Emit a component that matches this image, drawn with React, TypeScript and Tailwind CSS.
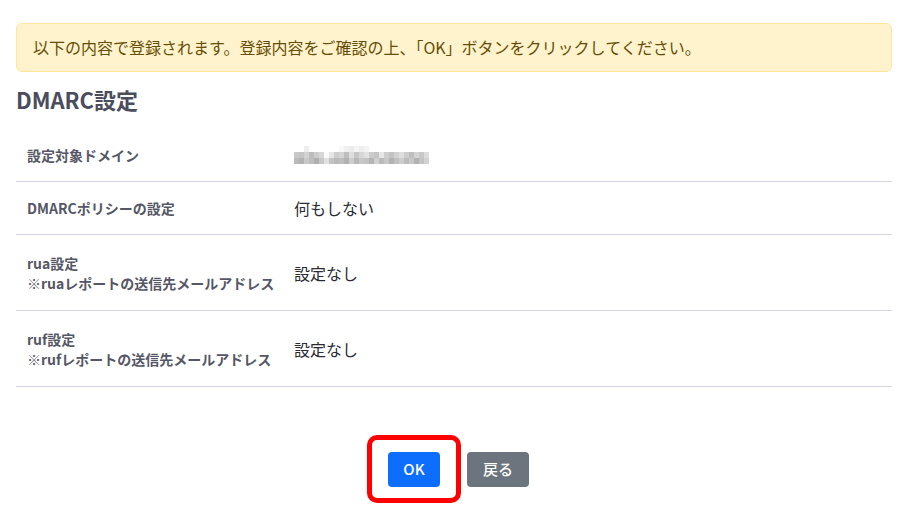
import React from 'react';

const FONT = "font-['Noto_Sans_CJK_JP','Noto_Sans',sans-serif]";

// pixelated placeholder for the masked domain name
const MASK_ROWS: number[][] = [
  [255, 255, 238, 255, 255, 255, 255, 255, 255, 248, 240, 236, 245, 238, 244, 255, 255, 255, 255, 255, 255, 255, 255, 255, 255, 255, 255],
  [200, 196, 210, 188, 205, 215, 250, 230, 205, 212, 190, 222, 198, 215, 226, 203, 196, 230, 205, 195, 210, 222, 205, 190, 212, 200, 220],
  [186, 178, 200, 190, 175, 200, 225, 196, 186, 190, 178, 205, 184, 200, 195, 180, 208, 186, 200, 178, 192, 205, 188, 200, 178, 195, 210],
];

const MaskedText: React.FC = () => (
  <svg width="137" height="18" viewBox="0 0 137 18" className="block">
    {MASK_ROWS.map((row, r) =>
      row.map((v, c) => (
        <rect key={`${r}-${c}`} x={c * 5} y={r * 6} width="5" height="6" fill={`rgb(${v},${v},${v})`} />
      ))
    )}
  </svg>
);

type Row = { label: React.ReactNode; value: React.ReactNode; tall?: boolean };

const rows: Row[] = [
  { label: '設定対象ドメイン', value: <MaskedText /> },
  { label: 'DMARCポリシーの設定', value: '何もしない' },
  {
    label: (
      <>
        rua設定
        <br />
        ※ruaレポートの送信先メールアドレス
      </>
    ),
    value: '設定なし',
    tall: true,
  },
  {
    label: (
      <>
        ruf設定
        <br />
        ※rufレポートの送信先メールアドレス
      </>
    ),
    value: '設定なし',
    tall: true,
  },
];

export default function App() {
  return (
    <div className={`min-h-screen bg-white px-4 pt-[23px] ${FONT}`}>
      <div className="rounded-md border border-[#ffe69c] bg-[#fff3cd] px-4 py-[11px] text-[16px] leading-[25px] text-[#664d03]">
        以下の内容で登録されます。登録内容をご確認の上、「OK」ボタンをクリックしてください。
      </div>

      <h2 className="mt-[12px] text-[22px] font-bold leading-[30px] text-[#4b4c5c]">DMARC設定</h2>

      <div className="mt-[14px]">
        {rows.map((row, i) => (
          <div
            key={i}
            className={`flex items-center border-b border-[#d4d3df] ${row.tall ? 'h-[76px]' : i === 0 ? 'h-[54px]' : 'h-[53px]'}`}
          >
            <div className="w-[267px] shrink-0 pl-[11px] text-[14px] font-bold leading-[20px] text-[#565766]">
              {row.label}
            </div>
            <div className="pl-[11px] text-[16px] leading-[24px] text-[#2b2b33]">{row.value}</div>
          </div>
        ))}
      </div>

      <div className="mt-[48px] flex items-center justify-center pr-[12px]">
        <div className="rounded-[10px] border-[5px] border-[#ff0000] px-4 pt-3 pb-[11px]">
          <button className="block h-[35px] w-[52px] rounded-[4px] bg-[#0d6efd] text-[15px] font-medium text-white">
            OK
          </button>
        </div>
        <button className="ml-[6px] h-[35px] w-[62px] rounded-[4px] bg-[#6c757d] text-[15px] font-medium text-white">
          戻る
        </button>
      </div>
    </div>
  );
}
